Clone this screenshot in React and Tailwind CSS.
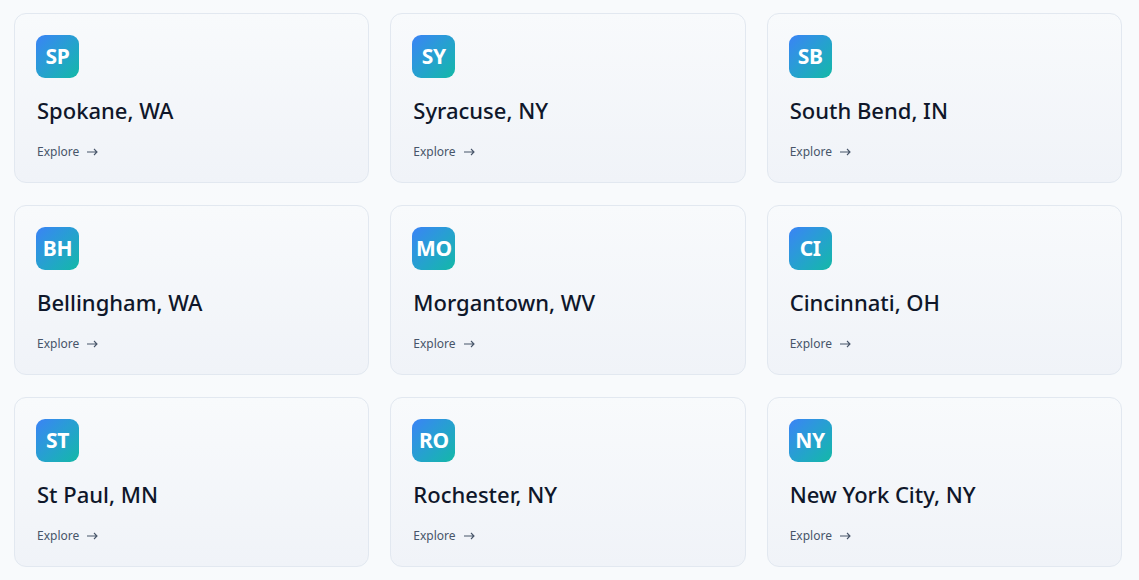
import React from "react";

const cities = [
  ["SP", "Spokane, WA"],
  ["SY", "Syracuse, NY"],
  ["SB", "South Bend, IN"],
  ["BH", "Bellingham, WA"],
  ["MO", "Morgantown, WV"],
  ["CI", "Cincinnati, OH"],
  ["ST", "St Paul, MN"],
  ["RO", "Rochester, NY"],
  ["NY", "New York City, NY"],
];

export default function App() {
  return (
    <div
      className="min-h-[580px] bg-[#f8fafc] pt-[13px] pl-[14px]"
      style={{ fontFamily: '"Noto Sans", "Open Sans", sans-serif' }}
    >
      <div className="grid w-[1108px] grid-cols-3 gap-x-[21px] gap-y-[22px]">
        {cities.map(([abbr, name]) => (
          <div
            key={abbr}
            className="h-[170px] rounded-[12px] border border-[#e2e8f0] bg-gradient-to-b from-[#f8fafc] to-[#f0f3f8] px-[21px] pt-[21px]"
          >
            <div className="flex h-[43px] w-[43px] items-center justify-center rounded-[9px] bg-gradient-to-br from-[#3b82f6] to-[#14b8a6] text-[21px] font-bold leading-none tracking-[-0.3px] text-white">
              {abbr}
            </div>
            <div className="mt-[17px] pl-[1px] text-[22px] font-medium leading-[30px] text-[#0f172a]">
              {name}
            </div>
            <div className="mt-[19px] flex items-center gap-[8px] pl-[1px] text-[12px] leading-[16px] text-[#475569]">
              <span>Explore</span>
              <svg width="11" height="8" viewBox="0 0 11 8" fill="none" stroke="#475569" strokeWidth="1.1">
                <path d="M0 4H10M7 1L10 4L7 7" />
              </svg>
            </div>
          </div>
        ))}
      </div>
    </div>
  );
}
